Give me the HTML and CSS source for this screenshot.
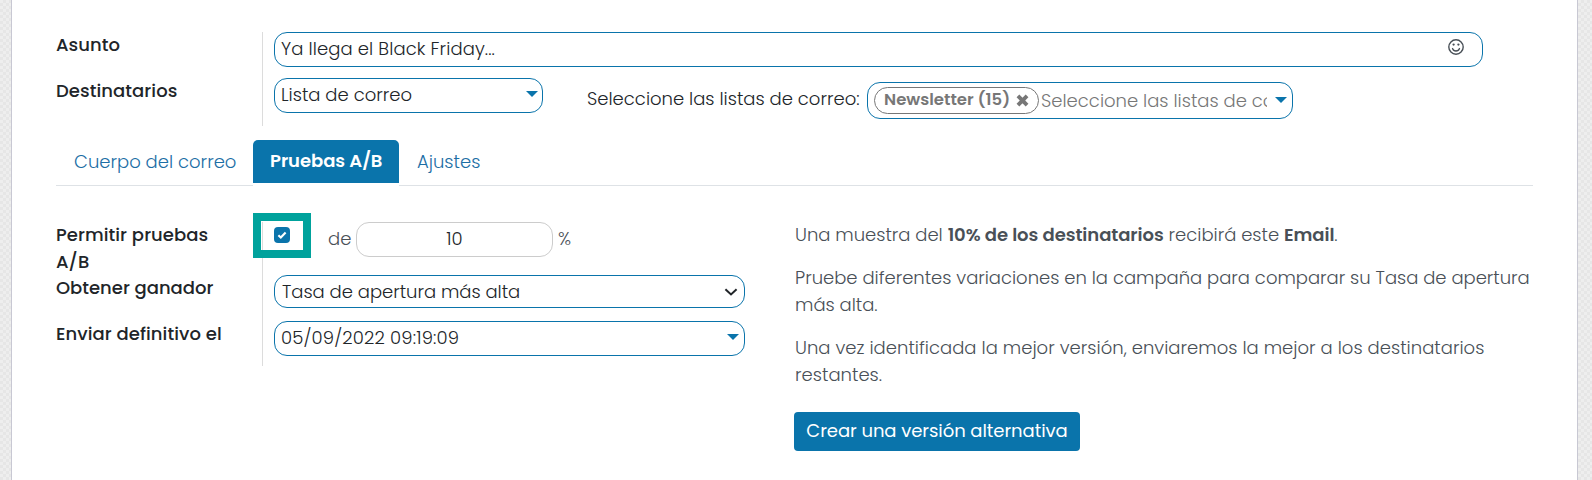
FILE: index.html
```
<!DOCTYPE html>
<html lang="es">
<head>
<meta charset="utf-8">
<title>Envío de correo</title>
<link rel="stylesheet" href="styles.css">
</head>
<body>
<main class="sheet">
  <section class="group group-main">
    <div class="labels labels-main">
      <span class="label">Asunto</span>
      <span class="label">Destinatarios</span>
    </div>
    <div class="fields fields-main">
      <div class="control control-subject">
        <span>Ya llega el Black Friday...</span>
        <svg class="smile" viewBox="0 0 16 16" width="16" height="16"><circle cx="8" cy="8" r="7.2" fill="none" stroke="currentColor" stroke-width="1.4"/><circle cx="5.6" cy="5.6" r="1.15" fill="currentColor"/><circle cx="10.4" cy="5.6" r="1.15" fill="currentColor"/><path d="M4.5 9.5c.5 1.5 1.8 2.5 3.5 2.5s3-1 3.5-2.5" fill="none" stroke="currentColor" stroke-width="1.3" stroke-linecap="round"/></svg>
      </div>
      <div class="recipients">
        <div class="control control-type"><span>Lista de correo</span><i class="caret"></i></div>
        <span class="lists-label">Seleccione las listas de correo:</span>
        <div class="control control-lists">
          <span class="tag">Newsletter (15)<svg viewBox="0 0 12 12" width="13" height="13"><path d="M1.8 1.8l8.4 8.4M10.2 1.8l-8.4 8.4" stroke="currentColor" stroke-width="3.6"/></svg></span>
          <span class="placeholder">Seleccione las listas de correo</span>
          <i class="caret"></i>
        </div>
      </div>
    </div>
  </section>

  <nav class="tabs">
    <a class="tab tab-body">Cuerpo del correo</a>
    <a class="tab tab-active">Pruebas A/B</a>
    <a class="tab tab-settings">Ajustes</a>
  </nav>

  <div class="panel">
    <section class="group group-ab">
      <div class="labels labels-ab">
        <span class="label label-allow">Permitir pruebas A/B</span>
        <span class="label label-winner">Obtener ganador</span>
        <span class="label">Enviar definitivo el</span>
      </div>
      <div class="fields fields-ab">
        <div class="highlight"></div>
        <div class="sample">
          <span class="checkbox"><svg viewBox="0 0 16 16" width="16" height="16"><path d="M4.4 8.2l2.4 2.3 4.8-5" fill="none" stroke="#fff" stroke-width="2.1"/></svg></span>
          <span class="of">de</span>
          <div class="control control-percent">10</div>
          <span class="percent">%</span>
        </div>
        <div class="control control-winner"><span>Tasa de apertura más alta</span><svg viewBox="0 0 14 8" width="14" height="8"><path d="M1.4 1.2L7 6.4l5.6-5.2" fill="none" stroke="#212529" stroke-width="2"/></svg></div>
        <div class="control control-date"><span>05/09/2022 09:19:09</span><i class="caret"></i></div>
      </div>
    </section>

    <section class="info">
      <p>Una muestra del <b>10% de los destinatarios</b> recibirá este <b>Email</b>.</p>
      <p>Pruebe diferentes variaciones en la campaña para comparar su Tasa de apertura más alta.</p>
      <p>Una vez identificada la mejor versión, enviaremos la mejor a los destinatarios restantes.</p>
      <button class="button">Crear una versión alternativa</button>
    </section>
  </div>
</main>
</body>
</html>
```
FILE: styles.css
```
* { box-sizing: border-box; }

body {
  margin: 0;
  height: 480px;
  overflow: hidden;
  padding: 0 14px 0 11px;
  font: 300 18px/27px Poppins, Inter, sans-serif;
  color: #212529;
  background: repeating-conic-gradient(#e6e6e6 0 25%, #eeeeee 0 50%) 0 0 / 6px 6px;
}

.sheet {
  height: 480px;
  padding: 32px 44px 0;
  background: #fff;
  border: solid #c8c8d3;
  border-width: 0 1px;
}

.group { display: flex; }
.group-main { height: 94px; }
.group-ab { width: 689px; height: 144px; flex: none; }

.labels { width: 206px; flex: none; display: flex; flex-direction: column; }
.labels-main { gap: 19px; margin-top: -1px; }
.labels-ab { margin-top: -1px; }
.label { font-weight: 500; letter-spacing: .07px; white-space: nowrap; }
.label-allow { width: 170px; white-space: normal; }
.label-winner { margin: -1px 0 19px; letter-spacing: 0; }

.fields {
  flex: 1;
  position: relative;
  display: flex;
  flex-direction: column;
  border-left: 1px solid #dcdcdc;
  padding-left: 11px;
}
.fields-main { gap: 11px; }

.control {
  height: 35px;
  display: flex;
  align-items: center;
  justify-content: space-between;
  padding: 0 6px 2px;
  border: 1px solid #0a74ab;
  border-radius: 13px;
  background: #fff;
  white-space: nowrap;
}
.control-subject { width: 1209px; padding-right: 18px; letter-spacing: .1px; }
.smile { color: #495057; margin-bottom: 4px; }
.recipients { display: flex; align-items: flex-start; }
.control-type { width: 269px; padding-right: 4px; }
.lists-label { margin: 7px 0 0 44px; width: 280px; white-space: nowrap; }
.control-lists { width: 426px; height: 37px; margin-top: 4px; padding: 0 5px 0 6px; }

.caret {
  border: solid transparent;
  border-width: 6px 6px 0;
  border-top-color: #0a74ab;
  margin-bottom: 1px;
}

.tag {
  width: 165px;
  height: 27px;
  flex: none;
  display: flex;
  align-items: center;
  justify-content: space-between;
  padding: 0 9px 3px;
  border: 1.5px solid #777;
  border-radius: 14px;
  color: #777;
  font-size: 16.5px;
  font-weight: 600;
}
.tag svg { position: relative; top: 1px; }
.placeholder {
  width: 226px;
  margin: 0 auto 0 2px;
  overflow: hidden;
  color: #777;
}

.tabs {
  display: flex;
  height: 46px;
  margin-top: 14px;
  border-bottom: 1px solid #dee2e6;
}
.tab { padding-top: 8px; color: #1c6ea5; white-space: nowrap; }
.tab-body { width: 197px; padding-left: 18px; }
.tab-active {
  height: 46px;
  width: 146px;
  padding: 7px 0 0 17px;
  font-weight: 600;
  letter-spacing: -.05px;
  color: #fff;
  border-bottom: 3px solid #fff;
  border-radius: 5px 5px 0 0;
  background: #0a74ab padding-box;
}
.tab-settings { padding-left: 18px; }

.panel { display: flex; padding-top: 36px; }

.highlight {
  position: absolute;
  left: -10px;
  top: -9px;
  width: 58px;
  height: 45px;
  border: 8px solid #00a29c;
}
.sample { display: flex; align-items: center; height: 35px; }
.checkbox { width: 16px; height: 16px; margin-bottom: 9px; border-radius: 4px; background: #0a74ab; }
.checkbox svg { display: block; }
.of { width: 28px; margin: -2px 0 0 38px; color: #495057; }
.control-percent { width: 197px; justify-content: center; border-color: #ccc; }
.percent { margin: -2px 0 0 5px; font-size: 18px; color: #495057; }
.control-winner { width: 471px; height: 33px; margin-top: 18px; padding: 0 6px 0 7px; }
.control-winner span { letter-spacing: -.03px; }
.control-date { width: 471px; margin-top: 13px; padding-right: 5px; letter-spacing: .16px; }

.info { width: 739px; flex: none; margin: -1px 0 0 50px; color: #495057; }
.info p { margin: 0 0 16px; letter-spacing: -.02px; }
.info p:nth-child(3) { letter-spacing: .02px; }
.info b { font-weight: 600; letter-spacing: -.06px; }
.button {
  display: block;
  margin: 24px 0 0 -1px;
  width: 286px;
  height: 39px;
  padding: 0 0 2px;
  border: 0;
  border-radius: 4px;
  background: #0a74ab;
  color: #fff;
  font: inherit;
  font-weight: 400;
  letter-spacing: -.06px;
}
```
